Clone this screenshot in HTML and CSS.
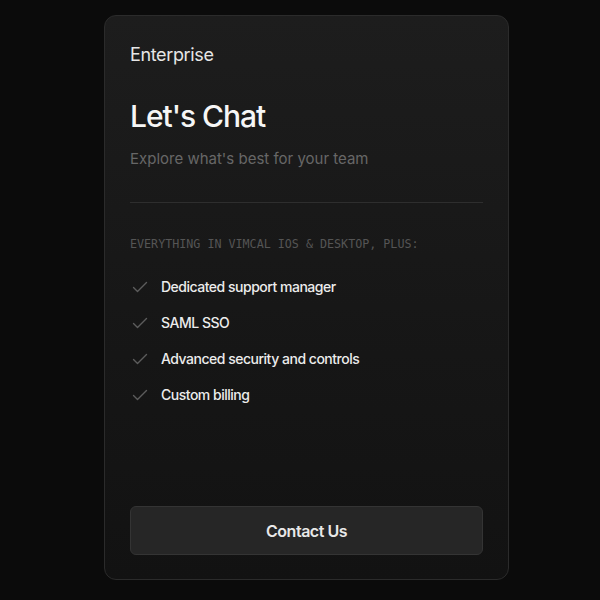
FILE: index.html
```html
<!DOCTYPE html>
<html lang="en">
<head>
    <meta charset="UTF-8">
    <meta name="viewport" content="width=device-width, initial-scale=1.0">
    <title>Enterprise</title>
    <link rel="stylesheet" href="styles.css">
</head>
<body>
    <div class="plan-card">
        <div class="plan-name">Enterprise</div>
        <h1 class="plan-price">Let's Chat</h1>
        <p class="plan-tagline">Explore what's best for your team</p>
        <hr class="divider">
        <div class="features-label">EVERYTHING IN VIMCAL IOS &amp; DESKTOP, PLUS:</div>
        <ul class="features">
            <li><svg class="check" viewBox="0 0 16 12"><path d="M1.5 6.5l4 4L14.5 1.5"/></svg>Dedicated support manager</li>
            <li><svg class="check" viewBox="0 0 16 12"><path d="M1.5 6.5l4 4L14.5 1.5"/></svg>SAML SSO</li>
            <li><svg class="check" viewBox="0 0 16 12"><path d="M1.5 6.5l4 4L14.5 1.5"/></svg>Advanced security and controls</li>
            <li><svg class="check" viewBox="0 0 16 12"><path d="M1.5 6.5l4 4L14.5 1.5"/></svg>Custom billing</li>
        </ul>
        <button class="contact-btn">Contact Us</button>
    </div>
</body>
</html>
```

FILE: styles.css
```css
body {
    margin: 0;
    padding: 15px 0 0 104px;
    background-color: #0b0b0b;
    font-family: 'Inter', sans-serif;
    color: #e8e8e8;
}
.plan-card {
    box-sizing: border-box;
    width: 405px;
    height: 565px;
    padding: 27px 25px 24px;
    display: flex;
    flex-direction: column;
    background: linear-gradient(180deg, #1d1d1d 0%, #161616 60%, #121212 100%);
    border: 1px solid #2b2b2b;
    border-radius: 12px;
}
.plan-name {
    font-size: 18px;
    line-height: 24px;
    letter-spacing: -0.02em;
    color: #e6e6e6;
}
.plan-price {
    margin: 31px 0 0;
    font-size: 30px;
    line-height: 36px;
    font-weight: 500;
    letter-spacing: -0.035em;
    color: #f6f6f6;
}
.plan-tagline {
    margin: 15px 0 0;
    font-size: 15px;
    line-height: 20px;
    letter-spacing: 0;
    color: #676767;
}
.divider {
    margin: 33px 0 0;
    border: none;
    border-top: 1px solid #2e2e2e;
}
.features-label {
    margin-top: 33px;
    font-family: 'DejaVu Sans Mono', monospace;
    font-size: 11.7px;
    line-height: 16px;
    color: #555555;
}
.features {
    list-style: none;
    margin: 25px 0 0;
    padding: 0;
    display: flex;
    flex-direction: column;
    gap: 16px;
}
.features li {
    display: flex;
    align-items: center;
    font-size: 14px;
    line-height: 20px;
    font-weight: 500;
    letter-spacing: -0.035em;
    color: #ececec;
}
.check {
    width: 16px;
    height: 12px;
    margin: 0 13px 0 2px;
    fill: none;
    stroke: #5c5c5c;
    stroke-width: 1.4;
    stroke-linecap: round;
    stroke-linejoin: round;
}
.contact-btn {
    margin-top: auto;
    height: 49px;
    width: 100%;
    background-color: #262626;
    border: 1px solid #343434;
    border-radius: 6px;
    font-family: 'Inter', sans-serif;
    font-size: 16px;
    font-weight: 600;
    letter-spacing: -0.03em;
    color: #e8e8e8;
    cursor: pointer;
}
```
